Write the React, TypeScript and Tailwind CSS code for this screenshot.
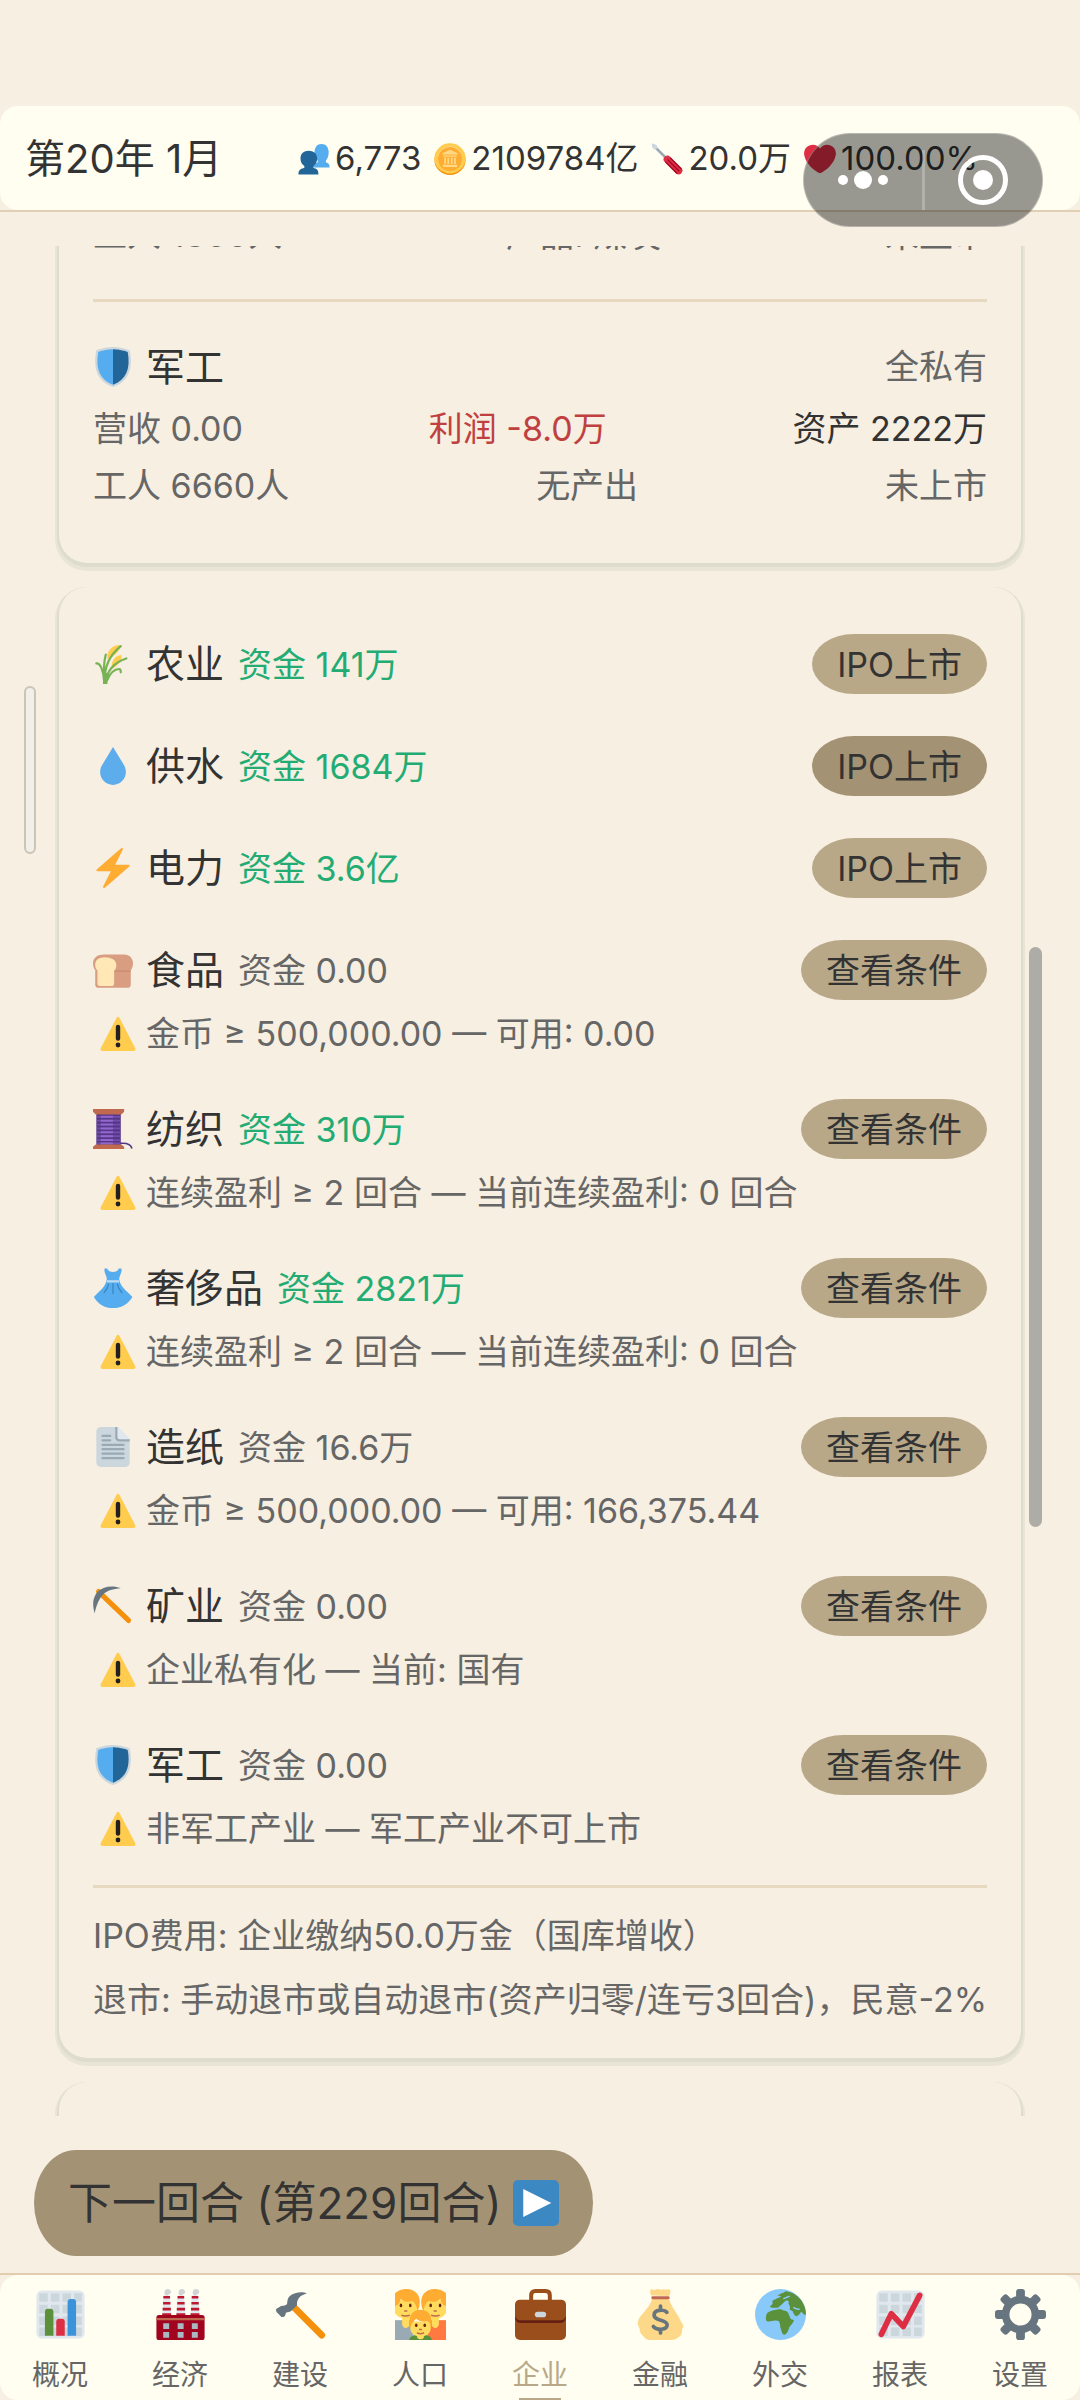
import type { ReactNode } from "react";

const Svg = ({ className, children }: { className: string; children: ReactNode }) => (
  <svg viewBox="0 0 36 36" className={`shrink-0 ${className}`} aria-hidden="true">
    {children}
  </svg>
);

const icons: Record<string, ReactNode> = {
  people: (
    <>
      <path
        fill="#55ACEE"
        d="M35.5 27.5H16c0-3 1.500-4.500 5-5.200 1.500-.4 1.600-1.500 1-2.600-2-2-3.500-4-3.500-8.200C18.500 4.500 21.500 1 26.500 1S34.500 4.500 34.500 10.500c0 4.500-1.300 7-2.800 8.800-.8 1.200-.5 2.400 1 2.900 2 .7 2.800 2.300 2.800 5.300z"
      />
      <path
        fill="#226699"
        d="M23 35.500H.5c0-4.500 1.500-6.300 5.500-7.200 1.500-.4 1.600-1.500.8-2.700-2.300-2-4-4-4-8.200C2.800 12 6.500 8.800 12 8.800s9.500 3.200 9.500 8.600c0 4.200-1.900 6.300-4 8.200-.9 1.200-.7 2.300.8 2.700 3.700.9 4.700 2.700 4.700 7.200z"
      />
    </>
  ),
  coin: (
    <>
      <ellipse cx="18" cy="19" rx="17.500" ry="17" fill="#F4900C" />
      <ellipse cx="18" cy="17.300" rx="17.500" ry="17" fill="#FFCC4D" />
      <circle cx="18" cy="17.500" r="13.500" fill="#FFE8B6" />
      <circle cx="18" cy="18" r="13.500" fill="#FFAC33" />
      <path fill="#FFD983" d="M18 7.500l-8.500 4V13h17v-1.500zM10.500 14h15v1.500h-15zM11.500 16.500h2v7h-2zM15 16.500h2v7h-2zM19 16.500h2v7h-2zM22.500 16.500h2v7h-2zM10 24.500h16V27H10z" />
    </>
  ),
  screwdriver: (
    <>
      <path stroke="#99AAB5" strokeWidth="3" strokeLinecap="round" d="M3 3l15 15" />
      <path fill="#CCD6DD" d="M.8 1.200L2 .5l4.500 2 .7 3.800L4.500 7.500 2 6z" />
      <path stroke="#DD2E44" strokeWidth="8.500" strokeLinecap="round" d="M18.500 18.500L31 31" />
      <path stroke="#A0041E" strokeWidth="1.300" strokeLinecap="round" fill="none" d="M16.500 21.500L29 34M19 19l12.500 12.500M22 17l12 12" />
    </>
  ),
  heart: (
    <path
      fill="#DD2E44"
      d="M35.885 11.833c0-5.450-4.418-9.868-9.867-9.868-3.308 0-6.227 1.633-8.018 4.129-1.791-2.496-4.710-4.129-8.017-4.129-5.450 0-9.868 4.417-9.868 9.868 0 .772.098 1.520.266 2.241C1.751 22.587 11.216 31.568 18 34.034c6.783-2.466 16.249-11.447 17.617-19.959.170-.721.268-1.469.268-2.242z"
    />
  ),
  shield: (
    <>
      <path fill="#CCD6DD" d="M33 3c-7-3-15-3-15-3S10 0 3 3C0 18 3 31 18 36c15-5 18-18 15-33z" />
      <path fill="#55ACEE" d="M18 33.884C6.412 29.729 1.961 19.831 4.760 4.444 11.063 2.029 17.928 2 18 2z" />
      <path fill="#226699" d="M31.240 4.444C25.013 2.055 18.123 2.001 18 2v31.884c11.588-4.155 16.039-14.053 13.240-29.440z" />
    </>
  ),
  wheat: (
    <>
      <g fill="#FFCC4D">
        <path d="M13 13.500C12 6 17 .8 24.500.8 25 6 19 11 13 13.500z" />
        <path d="M17 22.500c-1-6 2-12 8.500-12.500 1.500 4-3.500 10-8.500 12.500z" />
      </g>
      <g fill="none" stroke="#77B255" strokeLinecap="round" strokeWidth="2">
        <path d="M10.500 34.500C9.500 26 9.500 17 11.500 9.500" />
        <path d="M10.500 34C10 21 15 10 25 2M11.500 34c1.500-11 9-18 18.500-21M12.500 33c3-7 7-10.500 11-10.500 1.500 0 1.500 1.500 1.500 3M10 33C9.500 24 6.500 17 3 17.500" />
        <path strokeWidth="4" strokeLinecap="butt" d="M11 26v10" />
      </g>
    </>
  ),
  water: <path fill="#5DADEC" d="M18 1L8 17.500C7 19 6.400 21 6.400 23.500 6.400 30 11.600 35 18 35s11.600-5 11.600-11.500c0-2.300-.6-4.300-1.500-6z" />,
  power: (
    <path
      fill="#FFAC33"
      d="M32.938 15.651C32.792 15.260 32.418 15 32 15H19.925L26.890 1.458c.219-.426.106-.947-.271-1.243C26.437.071 26.218 0 26 0c-.233 0-.466.082-.653.243L18 6.588 3.347 19.243c-.316.273-.430.714-.284 1.105S3.582 21 4 21h12.075L9.110 34.542c-.219.426-.106.947.271 1.243.182.144.401.215.619.215.233 0 .466-.082.653-.243L18 29.412l14.653-12.655c.317-.273.430-.714.285-1.106z"
    />
  ),
  bread: (
    <>
      <path fill="#D99E82" d="M10 4h18c5 0 8 3.500 8 8 0 3-1 5-2 6v13c0 2-1 3-3 3H5c-2 0-3-1-3-3V18c-1-1-2-3-2-6 0-5 4-8 10-8z" />
      <path stroke="#C1836A" strokeWidth=".8" d="M19 19h15" />
      <path fill="#FFE8B6" d="M10.500 6.500C16.500 6.500 21 9 21 13.500c0 3-1 4.500-2 5V30c0 2-1 2.500-2.500 2.500h-10C4.500 32.500 4 31.500 4 30V18.500c-1-1-2-2.500-2-5C2 9 5 6.500 10.500 6.500z" />
    </>
  ),
  thread: (
    <>
      <path fill="none" stroke="#553788" strokeWidth="1.500" d="M24 31c5-.5 10 0 11 4.500" />
      <path fill="#553788" d="M3 4h22v29H3z" />
      <path stroke="#744EAA" strokeWidth="1.600" d="M3.500 7h21M3.500 10.500h21M3.500 14h21M3.500 17.500h21M3.500 21h21M3.500 24.500h21M3.500 28h21M3.500 31h21" />
      <path stroke="#9266CC" strokeWidth="1.800" d="M7 7h11M7 10.500h11M7 14h11M7 17.500h11M7 21h11M7 24.500h11M7 28h11M7 31h11" />
      <path fill="#C1694F" d="M0 0h28v2.500L25.500 5h-23L0 2.500zM2.500 32h23l2.500 2v2H0v-2z" />
    </>
  ),
  dress: (
    <>
      <path fill="#55ACEE" d="M10.500.5h2.300c.5 2 2.500 3 5.200 3s4.700-1 5.200-3h2.300c1 3-1.500 5.500-2 9.500 1 7 6 10 12 16C31 33 25 36 18 36S5 33 .8 26c6-6 10.700-9 11.700-16-.5-4-3-6.500-2-9.500z" />
      <path fill="#BBDDF5" d="M12.600 11h10.800v2H12.600z" />
      <path stroke="#3B88C3" strokeWidth="1.200" strokeLinecap="round" fill="none" d="M18 14v9M14 14.500c-.5 3-2 5.500-4 7.500M22 14.500c.5 3 2 5.500 4 7.500" />
    </>
  ),
  paper: (
    <>
      <path fill="#CCD6DD" d="M22 0H7C4.791 0 3 1.791 3 4v28c0 2.209 1.791 4 4 4h22c2.209 0 4-1.791 4-4V11z" />
      <path fill="#E1E8ED" d="M21 0c1 0 2 .2 2.600.8l8.600 8.600c.6.600.8 1.600.8 2.600h-9c-2 0-3-1-3-3z" />
      <path fill="none" stroke="#99AAB5" strokeWidth="2" d="M21 0v9c0 2 1 3 3 3h9" />
      <path stroke="#99AAB5" strokeWidth="2" strokeLinecap="round" d="M8.500 8h7M8.500 12h7M8.500 16h19M8.500 20h19M8.500 24h19M8.500 28h19" />
    </>
  ),
  pickaxe: (
    <>
      <path stroke="#F4900C" strokeWidth="4.600" strokeLinecap="round" d="M5 5l27 26" />
      <path fill="#66757F" d="M1.500 24.500C-1.500 15 1 8 5 4.500S17-1 25 2c-7 .5-12 2-15.500 5.200S3 17 1.500 24.500z" />
    </>
  ),
  warning: (
    <>
      <path fill="#FFCC4D" d="M2.653 35C.811 35-.001 33.662.847 32.027L16.456 1.972c.849-1.635 2.238-1.635 3.087 0l15.609 30.056c.850 1.634.037 2.972-1.805 2.972H2.653z" />
      <circle cx="18" cy="29" r="2.400" fill="#231F20" />
      <path stroke="#231F20" strokeWidth="4.400" strokeLinecap="round" d="M18 11v11.500" />
    </>
  ),
  play: (
    <>
      <rect width="36" height="36" rx="4" fill="#3B88C3" />
      <path fill="#FFF" d="M8 7l22 11L8 29z" />
    </>
  ),
  bars: (
    <>
      <rect x="1" y="1" width="34" height="34" rx="4" fill="#E1E8ED" />
      <path stroke="#CCD6DD" strokeWidth="6" strokeDasharray="6 2.200" d="M3 6h30M3 14.200h30M3 22.400h30M3 30.200h30" />
      <path fill="#5C913B" d="M13 33H7V16c0-1.100.9-2 2-2h2c1.100 0 2 .9 2 2z" />
      <path fill="#DD2E44" d="M21 33h-6V23c0-1.100.9-2 2-2h2c1.100 0 2 .9 2 2z" />
      <path fill="#3B94D9" d="M29 33h-6V9c0-1.100.9-2 2-2h2c1.100 0 2 .9 2 2z" />
    </>
  ),
  factory: (
    <>
      {[0, 10, 20].map((x) => (
        <g key={x} transform={`translate(${x} 0)`}>
          <path fill="#D1D3D4" d="M7.500 4.500c-1.500-1.500-1-4.500 1.500-4.500s3 3 1.200 3.500c-.7.200-.7.700-1.200 1z" />
          <path fill="#E1E8ED" d="M6 4.500h4.500l1 15h-6.500z" />
          <path stroke="#BE1931" strokeWidth="1.800" d="M5.900 5.800h4.700M5.700 10h5.200M5.400 14.200h5.800M5.100 18h6.300" />
        </g>
      ))}
      <rect x="1" y="18.300" width="34" height="17.700" rx="1.800" fill="#A0041E" />
      <path fill="#C1694F" d="M1 20.500h34V22H1z" />
      <path fill="#AAB8C2" d="M5.800 24.200H10v4H5.800zM16 24.200h4.200v4H16zM26 24.200h4.200v4H26zM5.800 30.400H10v4H5.800zM16 30.400h4.200v4H16zM26 30.400h4.200v4H26z" />
    </>
  ),
  hammer: (
    <>
      <path stroke="#F4900C" strokeWidth="4.800" strokeLinecap="round" d="M14 13.500L33 32.500" />
      <path fill="#66757F" d="M22.500 3.200C20 1.800 14 2 10.500 5 8.500 7 9 8.500 8.500 10.500 7 12 5 11.500 4 12.200L.8 14.200c-.3 1.300.3 2.500 1.200 3l2.500 2.500 2-.2c.5-.5 1.300-1.500 1-2.500 1.500-1 3-.5 4.500-2L15.600 11.500c-.5-4 2-7.300 6.900-8.300z" />
    </>
  ),
  family: (
    <>
      <path fill="#99AAB5" d="M0 22h13v14H0z" />
      <path fill="#FF7940" d="M23 22h13v14H23z" />
      {[0, 1].map((side) => (
        <g key={side} transform={side ? "matrix(-1 0 0 1 36 0)" : undefined}>
          <path fill="#FFDC5D" d="M5 20h5v6c-.5 1-1.300 1.500-2.500 1.500S5.500 26.500 5 25z" />
          <path fill="#FFDC5D" d="M0 8h16v4c0 6-4 9-8 9s-7-2-8-4z" />
          <path fill="#FFAC33" d="M0 3c2-2 5-3 8-3 6 0 9.500 4 9.500 9 0 3-.6 5-1.700 6.500-.3-3-1.600-5.500-3.300-7C9 9.500 6.500 9 4 7c-.5 2.500-1.500 4-4 5z" />
          <ellipse cx="4.200" cy="11.600" rx=".9" ry="1.300" fill="#662113" />
          <ellipse cx="10.800" cy="11.600" rx=".9" ry="1.300" fill="#662113" />
          <path fill="none" stroke="#C1694F" d="M6.500 15.500h2.200M4.500 18.500c1.500.8 4.500.8 6 0" />
        </g>
      ))}
      <path fill="#5C913B" d="M10 36c.5-2.500 3-3.500 5-3.500h6c2.500 0 4.500 1 5 3.500z" />
      <path fill="#FFDC5D" d="M15.500 31h5v3c-1 2-4 2-5 0zM10.700 23h14.600v4c0 4.500-3.500 6.500-7.300 6.500s-7.300-2-7.300-6.500z" />
      <path fill="#FFAC33" d="M10.700 28C8.500 20 12 14.700 18 14.700S27.500 20 25.300 28c-.2-2.500-.8-4.500-2-5.500-3 1-6.300.3-8.300-1.500-1 1-3.800 3-4.300 7z" />
      <ellipse cx="15" cy="25.600" rx=".9" ry="1.300" fill="#662113" />
      <ellipse cx="21" cy="25.600" rx=".9" ry="1.300" fill="#662113" />
      <path fill="none" stroke="#C1694F" d="M17 28.600h2M15.500 30.800c1.300.8 3.700.8 5 0" />
    </>
  ),
  briefcase: (
    <>
      <path fill="none" stroke="#9A4E1C" strokeWidth="2.800" d="M11.400 9V4.500c0-2 1-3.100 3-3.100h7.200c2 0 3 1.100 3 3.100V9" />
      <rect y="7.500" width="36" height="28.500" rx="3.500" fill="#9A4E1C" />
      <path fill="#662113" d="M0 19c.5 2 2 3 4 3h28c2 0 3.500-1 4-3v1.500c-.5 2.500-2 3.500-4 3.500H4c-2 0-3.500-1-4-3.500z" />
      <rect x="14" y="16" width="8" height="4" rx="2" fill="#CCD6DD" />
    </>
  ),
  money: (
    <>
      <path fill="#FDD888" d="M11.500 4.500C10.500 3 10.500 1 11 .6c1-1 2 .3 3 0s2-.8 3.500-.3 2-.5 3.500 0 2.500-.8 3.500.2.500 3-.5 4.500z" />
      <path fill="#FDD888" d="M12 7h12c1 4 4 8 6.500 12 1 1.500 1.500 3.500 3 5.500 1 1.500.5 3-.3 4 .3 4.500-2.200 5-3.700 6.500-1.500 1-3 1-5 1H11c-3 0-4-1.500-5.500-3C3.500 31 3.300 29.500 3.200 27.500 1.500 25.500 1.800 23 3 20.500 6 16 11 12 12 7z" />
      <path stroke="#BF6952" strokeWidth="2" strokeLinecap="round" d="M12.500 6.200h11" />
      <path fill="none" stroke="#67757F" strokeWidth="2.600" strokeLinecap="round" d="M18 12v2M18 29v2M22.500 16.500c-1.500-2-9-2.500-9 1.800 0 4.700 9.200 2.700 9.200 7 0 4.200-7.700 3.700-9.700 1.200" />
    </>
  ),
  globe: (
    <>
      <circle cx="18" cy="18" r="18" fill="#88C9F9" />
      <path fill="#5C913B" d="M7.800 22c-.3-2 0-4 1-5.200 2-1 2.500-1.700 5-2 2-.3 4-.9 5-.3 1 1 2.800.6 4 1.500 1.500 1.700 1.500 4.500 3.200 5.600l1.500.3c-.5 2.500-3 4-3.600 6-.5 2-1.400 3.700-3 4.400-1.700.2-1.800-2-2.500-3.500-.9-2-.3-4-1.500-6-1.500-.9-3.500-.6-5.200-.2-1.500.4-3 .7-3.900-.6z" />
      <path fill="#5C913B" d="M16 4.800C17 3 20 3.200 21.500 1.500c7 .5 14.500 7 14.500 16.500-1.500.8-2.300-1.500-3.500-2-.7 1.500-2 2.500-3 3.300-1.600 0-2.500-2.300-3-3.700l-2-1c.6-1.800-.2-3.600-1.300-5.100-.7 1-1.700 1.700-2.700 1.600-1.300.8-2 1.900-3.500 1.700-1.700.5-5.500 1-6.500-.5 1-1 2.200-1.300 2-2.800-1-1 .7-1.700 2-2.200 1-1 2.500-1 3.500-1.800 1-.7-1.500-.3-2-.7z" />
      <path fill="#88C9F9" d="M21 8.800c1-1.300 2.500-.7 3 .2l-1 2.200 1.500 1.700-2 1.600-3.500-.2-2.500-1.500 2-1.500z" />
      <path fill="none" stroke="#88C9F9" d="M24.500 5c-1.500.8-3 1-4.500 2M27 13c1.500 1 3 1.500 4.500 1.300" />
    </>
  ),
  trend: (
    <>
      <rect x="1" y="1" width="34" height="34" rx="4" fill="#E1E8ED" />
      <path stroke="#CCD6DD" strokeWidth="6" strokeDasharray="6 2.200" d="M3 6h30M3 14.200h30M3 22.400h30M3 30.200h30" />
      <path fill="none" stroke="#DD2E44" strokeWidth="4" strokeLinecap="round" strokeLinejoin="round" d="M4.500 32l7-14.500 8.500 9L31.500 4.500" />
    </>
  ),
  gear: (
    <>
      <circle cx="18" cy="18" r="10.500" fill="none" stroke="#66757F" strokeWidth="5.400" />
      {[0, 45, 90, 135, 180, 225, 270, 315].map((deg) => (
        <rect key={deg} x="14.900" y="0" width="6.200" height="7" rx="2" fill="#66757F" transform={`rotate(${deg} 18 18)`} />
      ))}
    </>
  ),
};

const stats = [
  { icon: "people", value: "6,773" },
  { icon: "coin", value: "2109784亿" },
  { icon: "screwdriver", value: "20.0万" },
  { icon: "heart", value: "100.00%" },
];

const companies = [
  { icon: "wheat", name: "农业", fund: "141万", rich: true },
  { icon: "water", name: "供水", fund: "1684万", rich: true, pressed: true },
  { icon: "power", name: "电力", fund: "3.6亿", rich: true },
  { icon: "bread", name: "食品", fund: "0.00", need: "金币 ≥ 500,000.00 — 可用: 0.00" },
  { icon: "thread", name: "纺织", fund: "310万", rich: true, need: "连续盈利 ≥ 2 回合 — 当前连续盈利: 0 回合" },
  { icon: "dress", name: "奢侈品", fund: "2821万", rich: true, need: "连续盈利 ≥ 2 回合 — 当前连续盈利: 0 回合" },
  { icon: "paper", name: "造纸", fund: "16.6万", need: "金币 ≥ 500,000.00 — 可用: 166,375.44" },
  { icon: "pickaxe", name: "矿业", fund: "0.00", need: "企业私有化 — 当前: 国有" },
  { icon: "shield", name: "军工", fund: "0.00", need: "非军工产业 — 军工产业不可上市" },
];

const tabs = [
  { icon: "bars", label: "概况" },
  { icon: "factory", label: "经济" },
  { icon: "hammer", label: "建设" },
  { icon: "family", label: "人口" },
  { icon: "briefcase", label: "企业", active: true },
  { icon: "money", label: "金融" },
  { icon: "globe", label: "外交" },
  { icon: "trend", label: "报表" },
  { icon: "gear", label: "设置" },
];

const Card = ({ className, children }: { className: string; children?: ReactNode }) => (
  <section
    className={`shrink-0 rounded-[28px] bg-[#f6efe2] px-[34px] shadow-[0_2px_0_2px_#dedccc,0_4px_0_4px_#e8e5d6] ${className}`}
  >
    {children}
  </section>
);

const Header = () => (
  <header className="relative border-b-2 border-[#e0cfb4]">
    <div className="flex h-[104px] items-center justify-between rounded-[18px] bg-[#fffef0] pl-[25px] pr-[102px] pt-[2px]">
      <h1 className="text-[40px]">第20年 1月</h1>
      <ul className="flex gap-[13px] text-[33px]">
        {stats.map((s) => (
          <li key={s.icon} className="flex items-center gap-[5px]">
            <Svg className="size-8">{icons[s.icon]}</Svg>
            {s.value}
          </li>
        ))}
      </ul>
    </div>
    {/* mini program capsule */}
    <div className="absolute right-[37px] top-[27px] z-10 flex h-[94px] w-[240px] items-center rounded-full border border-white/30 bg-black/40">
      <button type="button" aria-label="更多" className="flex h-full flex-1 items-center justify-center gap-[6px]">
        <span className="size-[10px] rounded-full bg-white" />
        <span className="size-[18px] rounded-full bg-white" />
        <span className="size-[10px] rounded-full bg-white" />
      </button>
      <span className="h-[60px] w-[3px] bg-white/25" />
      <button type="button" aria-label="关闭" className="flex h-full flex-1 items-center justify-center">
        <span className="flex size-[50px] items-center justify-center rounded-full border-[5px] border-white">
          <span className="size-5 rounded-full bg-white" />
        </span>
      </button>
    </div>
  </header>
);

const IndustryCard = () => (
  <Card className="-mt-[39px] pb-[49px] text-[34px] leading-[56px] text-[#666]">
    <div className="flex justify-between">
      <span>工人 1800人</span>
      <span>产品: 煤炭</span>
      <span>未上市</span>
    </div>
    <hr className="mb-8 mt-9 border-t-[3px] border-[#e7d8c0]" />
    <div className="flex h-[66px] items-center justify-between">
      <h2 className="flex items-center gap-[13px] text-[39px] text-[#333]">
        <Svg className="size-10">{icons.shield}</Svg>
        军工
      </h2>
      <span>全私有</span>
    </div>
    <div className="mt-[1px] flex justify-between">
      <span>营收 0.00</span>
      <span className="text-[#c04040]">利润 -8.0万</span>
      <span className="text-[#333]">资产 2222万</span>
    </div>
    <div className="mt-[1px] flex justify-between">
      <span>工人 6660人</span>
      <span>无产出</span>
      <span>未上市</span>
    </div>
  </Card>
);

const IpoCard = () => (
  <Card className="pb-[26px] pt-[26px] text-[34px] text-[#666]">
    <ul>
      {companies.map((c) => (
        <li key={c.name} className="py-[18px]">
          <div className="flex h-[66px] items-center">
            <Svg className="mr-[13px] size-10">{icons[c.icon]}</Svg>
            <h3 className="mr-[14px] text-[39px] text-[#333]">{c.name}</h3>
            <span className={c.rich ? "text-[#22ac74]" : ""}>资金 {c.fund}</span>
            <button
              type="button"
              className={`ml-auto h-[60px] rounded-[42px/30px] px-[25px] text-[#333] ${c.pressed ? "bg-[#a39374]" : "bg-[#b8a888]"}`}
            >
              {c.need ? "查看条件" : "IPO上市"}
            </button>
          </div>
          {c.need && (
            <p className="mt-1 flex items-center pl-[7px] leading-[53px]">
              <Svg className="mr-[10px] size-9">{icons.warning}</Svg>
              {c.need}
            </p>
          )}
        </li>
      ))}
    </ul>
    <div className="mt-3 border-t-[3px] border-[#e7d8c0] pt-4 leading-[64px]">
      <p>IPO费用: 企业缴纳50.0万金（国库增收）</p>
      <p className="whitespace-nowrap">退市: 手动退市或自动退市(资产归零/连亏3回合)，民意-2%</p>
    </div>
  </Card>
);

const TabBar = () => (
  <nav className="border-t-2 border-[#e2cdb0]">
    <div className="flex h-[125px] rounded-[18px] bg-[#fffef0]">
      {tabs.map((t) => (
        <a
          key={t.label}
          href="#"
          className={`relative flex flex-1 flex-col items-center pt-[14px] text-[28px] leading-9 ${t.active ? "text-[#b8a888]" : "text-[#666]"}`}
        >
          <Svg className="mb-[17px] size-[51px]">{icons[t.icon]}</Svg>
          {t.label}
          {t.active && <span className="absolute bottom-0 h-[2px] w-[42px] bg-[#b8a888]" />}
        </a>
      ))}
    </div>
  </nav>
);

const App = () => {
  return (
    <div className="relative flex h-screen flex-col bg-[#f6efe2] pt-[106px] font-[Inter,'Noto_Sans_CJK_SC',sans-serif] text-[#333]">
      <Header />
      <main className="mt-[34px] flex min-h-0 flex-1 flex-col gap-6 overflow-hidden px-[59px]">
        <IndustryCard />
        <IpoCard />
        <Card className="h-[200px]" />
      </main>
      <div className="px-[34px] pb-[17px] pt-[34px]">
        <button
          type="button"
          className="flex h-[106px] items-center gap-3 rounded-[42px/53px] bg-[#a39374] px-[34px] text-[44px]"
        >
          下一回合 (第229回合)
          <Svg className="size-[46px]">{icons.play}</Svg>
        </button>
      </div>
      <TabBar />

      {/* side handle and scroll thumb */}
      <div className="absolute left-6 top-[686px] h-[168px] w-3 rounded-md border-2 border-[#cac5b7] bg-[#f2efe8]" />
      <div className="absolute right-[38px] top-[947px] h-[580px] w-[13px] rounded-full bg-[#aeaca6]" />
    </div>
  );
};

export default App;
